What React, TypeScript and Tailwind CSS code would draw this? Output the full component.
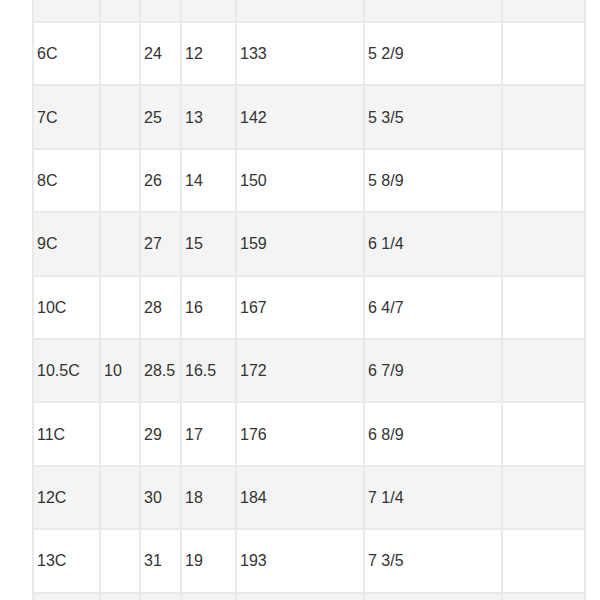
import React from "react";

type Row = [string, string, string, string, string, string, string];

const rows: Row[] = [
  ["6C", "", "24", "12", "133", "5 2/9", ""],
  ["7C", "", "25", "13", "142", "5 3/5", ""],
  ["8C", "", "26", "14", "150", "5 8/9", ""],
  ["9C", "", "27", "15", "159", "6 1/4", ""],
  ["10C", "", "28", "16", "167", "6 4/7", ""],
  ["10.5C", "10", "28.5", "16.5", "172", "6 7/9", ""],
  ["11C", "", "29", "17", "176", "6 8/9", ""],
  ["12C", "", "30", "18", "184", "7 1/4", ""],
  ["13C", "", "31", "19", "193", "7 3/5", ""],
];

const gridCols =
  "grid grid-cols-[65px_38px_39px_53px_126px_136px_81px] gap-[2px]";

const SizeTable: React.FC = () => {
  return (
    <div className="h-[600px] w-[600px] overflow-hidden bg-white">
      <div
        className="ml-[32px] w-[554px] bg-[#e9e9e9] px-[2px] pb-[2px] text-[16px] text-[#333333]"
        style={{ fontFamily: '"Liberation Sans", Arial, sans-serif' }}
      >
        {/* Top row, cut off by the screenshot */}
        <div className={`${gridCols} pb-[2px]`}>
          {Array.from({ length: 7 }).map((_, i) => (
            <div key={i} className="h-[21px] bg-[#f4f4f4]" />
          ))}
        </div>

        {rows.map((row, r) => (
          <div key={r} className={`${gridCols} pb-[2px]`}>
            {row.map((cell, c) => (
              <div
                key={c}
                className={`flex h-[61.4px] items-center pl-[3px] pt-[1px] ${
                  r % 2 === 0 ? "bg-white" : "bg-[#f4f4f4]"
                }`}
              >
                {cell}
              </div>
            ))}
          </div>
        ))}

        {/* Next row, cut off at the bottom */}
        <div className={gridCols}>
          {Array.from({ length: 7 }).map((_, i) => (
            <div key={i} className="h-[40px] bg-[#f4f4f4]" />
          ))}
        </div>
      </div>
    </div>
  );
};

export default function App() {
  return <SizeTable />;
}
